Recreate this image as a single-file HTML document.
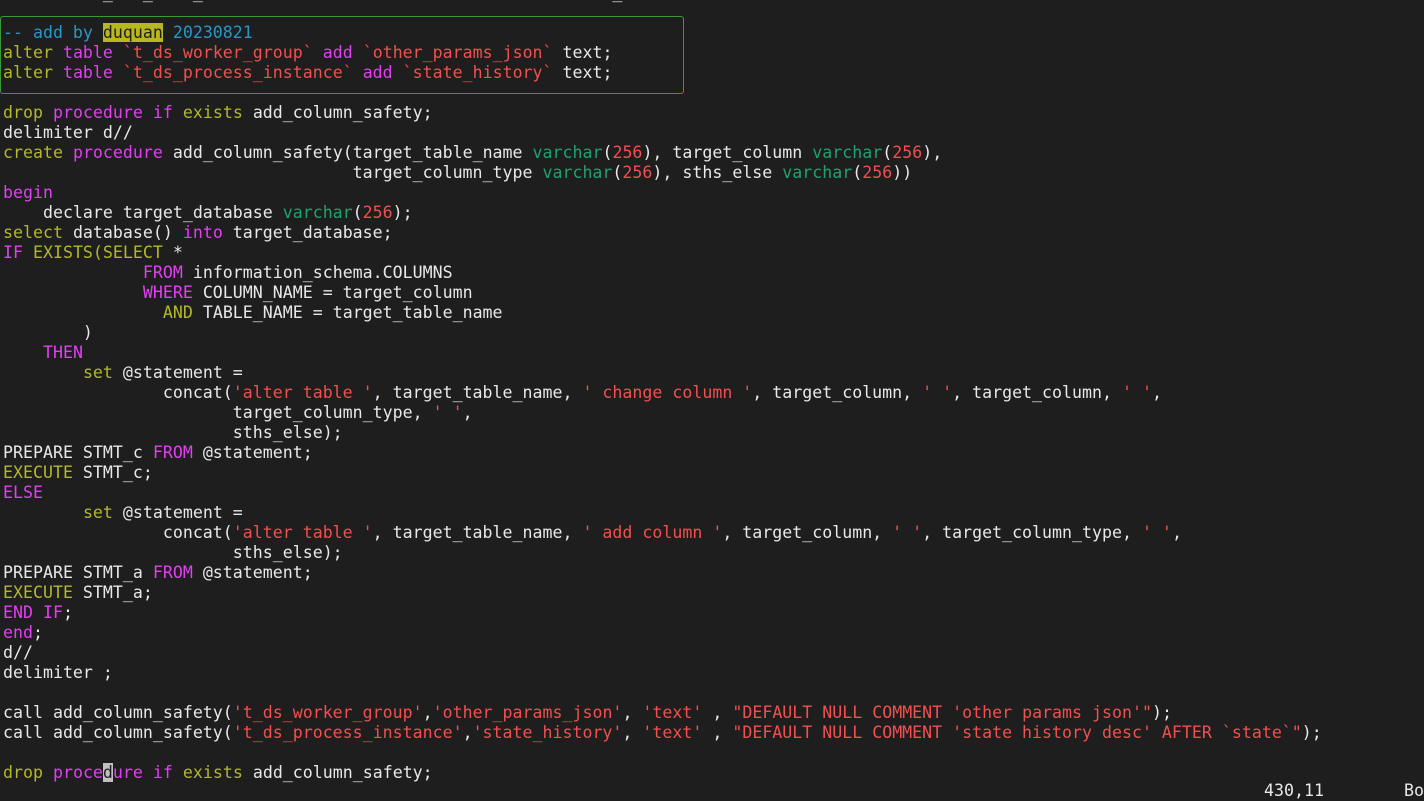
<!DOCTYPE html>
<html><head><meta charset="utf-8"><style>
html,body{margin:0;padding:0;background:#1e1e1e;width:1424px;height:792px;overflow:hidden}
pre{position:absolute;left:3px;top:-17px;margin:0;font-family:"DejaVu Sans Mono","Liberation Mono",monospace;font-size:16.6px;line-height:20px;color:#e8e8e8;white-space:pre}
.k{color:#b3b82a}.p{color:#e040f0}.s{color:#f05050}.t{color:#20a070}.c{color:#2a96c8}
.h{background:#b8b81e;color:#1e1e1e}.cur{background:#c0c0c0;color:#1e1e1e}
#box{position:absolute;left:0;top:16px;width:684px;height:78px;border:1px solid #3a9a3a;border-radius:3px;box-sizing:border-box}
.st{position:absolute;top:781px;font-family:"DejaVu Sans Mono",monospace;font-size:16.6px;color:#e8e8e8;line-height:20px}
</style></head><body>
<div id="box"></div>
<pre>          _   _    _                                         _              )

<span class="c">-- add by <span class="h">duquan</span> 20230821</span>
<span class="k">alter</span> <span class="p">table</span> <span class="s">`t_ds_worker_group`</span> <span class="p">add</span> <span class="s">`other_params_json`</span> text;
<span class="k">alter</span> <span class="p">table</span> <span class="s">`t_ds_process_instance`</span> <span class="p">add</span> <span class="s">`state_history`</span> text;

<span class="k">drop</span> <span class="p">procedure</span> <span class="p">if</span> <span class="k">exists</span> add_column_safety;
delimiter d//
<span class="k">create</span> <span class="p">procedure</span> add_column_safety(target_table_name <span class="t">varchar</span>(<span class="s">256</span>), target_column <span class="t">varchar</span>(<span class="s">256</span>),
                                   target_column_type <span class="t">varchar</span>(<span class="s">256</span>), sths_else <span class="t">varchar</span>(<span class="s">256</span>))
<span class="p">begin</span>
    declare target_database <span class="t">varchar</span>(<span class="s">256</span>);
<span class="k">select</span> database() <span class="p">into</span> target_database;
<span class="p">IF</span> <span class="k">EXISTS(SELECT</span> *
              <span class="p">FROM</span> information_schema.COLUMNS
              <span class="p">WHERE</span> COLUMN_NAME = target_column
                <span class="k">AND</span> TABLE_NAME = target_table_name
        )
    <span class="p">THEN</span>
        <span class="k">set</span> @statement =
                concat(<span class="s">'alter table '</span>, target_table_name, <span class="s">' change column '</span>, target_column, <span class="s">' '</span>, target_column, <span class="s">' '</span>,
                       target_column_type, <span class="s">' '</span>,
                       sths_else);
PREPARE STMT_c <span class="p">FROM</span> @statement;
<span class="k">EXECUTE</span> STMT_c;
<span class="p">ELSE</span>
        <span class="k">set</span> @statement =
                concat(<span class="s">'alter table '</span>, target_table_name, <span class="s">' add column '</span>, target_column, <span class="s">' '</span>, target_column_type, <span class="s">' '</span>,
                       sths_else);
PREPARE STMT_a <span class="p">FROM</span> @statement;
<span class="k">EXECUTE</span> STMT_a;
<span class="p">END IF</span>;
<span class="p">end</span>;
d//
delimiter ;

call add_column_safety(<span class="s">'t_ds_worker_group'</span>,<span class="s">'other_params_json'</span>, <span class="s">'text'</span> , <span class="s">"DEFAULT NULL COMMENT 'other params json'"</span>);
call add_column_safety(<span class="s">'t_ds_process_instance'</span>,<span class="s">'state_history'</span>, <span class="s">'text'</span> , <span class="s">"DEFAULT NULL COMMENT 'state history desc' AFTER `state`"</span>);

<span class="k">drop</span> <span class="p">proce<span class="cur">d</span>ure</span> <span class="p">if</span> <span class="k">exists</span> add_column_safety;</pre>
<div class="st" style="left:1264px">430,11</div>
<div class="st" style="left:1404px">Bo</div>
</body></html>
